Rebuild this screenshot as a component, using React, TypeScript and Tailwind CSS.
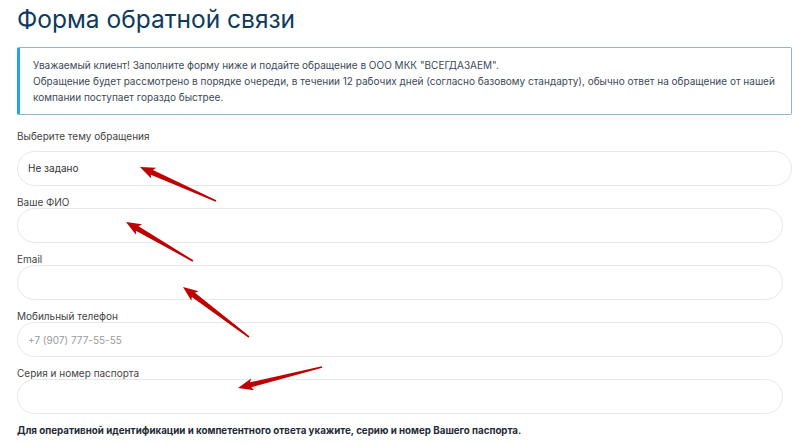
import React from "react";

type Arrow = { from: [number, number]; to: [number, number] };

const ARROWS: Arrow[] = [
  { from: [216, 201], to: [140, 167] },
  { from: [193, 261], to: [126, 222] },
  { from: [249, 337], to: [183, 287] },
  { from: [322, 367], to: [238, 388] },
];

function arrowPoints({ from, to }: Arrow) {
  const [x1, y1] = from;
  const [x2, y2] = to;
  const dx = x2 - x1;
  const dy = y2 - y1;
  const len = Math.hypot(dx, dy);
  const ux = dx / len;
  const uy = dy / len;
  const nx = -uy;
  const ny = ux;
  const headLen = 13;
  const headW = 6;
  const tailW = 0.8;
  const neckW = 2.6;
  const bx = x2 - ux * headLen;
  const by = y2 - uy * headLen;
  const pts: [number, number][] = [
    [x1 + nx * tailW, y1 + ny * tailW],
    [bx + nx * neckW, by + ny * neckW],
    [bx + nx * headW - ux * 2, by + ny * headW - uy * 2],
    [x2, y2],
    [bx - nx * headW - ux * 2, by - ny * headW - uy * 2],
    [bx - nx * neckW, by - ny * neckW],
    [x1 - nx * tailW, y1 - ny * tailW],
  ];
  return pts.map(p => p.join(",")).join(" ");
}

const FIELDS = [
  { label: "Ваше ФИО", placeholder: "" },
  { label: "Email", placeholder: "" },
  { label: "Мобильный телефон", placeholder: "+7 (907) 777-55-55" },
  { label: "Серия и номер паспорта", placeholder: "" },
];

export default function App() {
  return (
    <div className="relative w-[800px] h-[445px] overflow-hidden bg-white px-[17px] pt-[1px] font-['Inter','Noto_Sans',sans-serif]">
      <h1 className="text-[24.5px] leading-[36px] font-normal text-[#0e3a5e]">Форма обратной связи</h1>

      <div className="mt-[10px] w-[775px] rounded-[2px] border border-[#8fb6cc] border-l-[3px] border-l-[#1fa7e3] pl-[13px] pr-3 py-[9px] text-[10px] leading-[16px] text-[#3b4a57]">
        <p>Уважаемый клиент! Заполните форму ниже и подайте обращение в ООО МКК "ВСЕГДАЗАЕМ".</p>
        <p>Обращение будет рассмотрено в порядке очереди, в течении 12 рабочих дней (согласно базовому стандарту), обычно ответ на обращение от нашей компании поступает гораздо быстрее.</p>
      </div>

      <div className="mt-[15px]">
        <label className="block text-[10px] leading-[12px] text-[#444]">Выберите тему обращения</label>
        <div className="mt-[9px] w-[775px] h-[35px] rounded-full border border-[#e6e8ea] flex items-center px-[10px] text-[10px] text-[#333]">
          Не задано
        </div>
      </div>

      {FIELDS.map(f => (
        <div key={f.label} className="mt-[10px]">
          <label className="block text-[10px] leading-[12px] text-[#444]">{f.label}</label>
          <input
            type="text"
            placeholder={f.placeholder}
            className="block w-[766px] h-[35px] rounded-full border border-[#e6e8ea] px-[10px] text-[10px] text-[#333] placeholder:text-[#9a9a9a] outline-none"
          />
        </div>
      ))}

      <p className="mt-[10px] text-[9.75px] leading-[14px] font-bold text-[#1f2b37]">
        Для оперативной идентификации и компетентного ответа укажите, серию и номер Вашего паспорта.
      </p>

      <svg className="absolute inset-0 pointer-events-none" width="800" height="445" viewBox="0 0 800 445">
        {ARROWS.map((a, i) => (
          <polygon key={i} points={arrowPoints(a)} fill="#c00000" />
        ))}
      </svg>
    </div>
  );
}
